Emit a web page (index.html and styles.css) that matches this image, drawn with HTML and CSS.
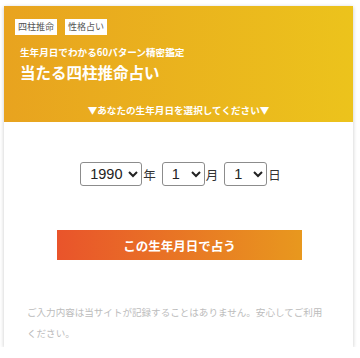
FILE: index.html
```html
<!DOCTYPE html>
<html lang="ja">
<head>
    <meta charset="UTF-8">
    <meta name="viewport" content="width=device-width, initial-scale=1.0">
    <title>当たる四柱推命占い</title>
    <link rel="stylesheet" href="styles.css">
</head>
<body>
    <div class="card">
        <div class="card-head">
            <div class="tags">
                <span class="tag">四柱推命</span>
                <span class="tag">性格占い</span>
            </div>
            <p class="sub">生年月日でわかる60パターン精密鑑定</p>
            <h1 class="title">当たる四柱推命占い</h1>
            <p class="lead">▼あなたの生年月日を選択してください▼</p>
        </div>

        <div class="card-body">
            <div class="date-row">
                <select class="sel sel-year" id="year">
                    <option>1990</option>
                </select><span class="unit">年</span>
                <select class="sel sel-small" id="month">
                    <option>1</option>
                </select><span class="unit">月</span>
                <select class="sel sel-small" id="day">
                    <option>1</option>
                </select><span class="unit">日</span>
            </div>

            <button class="btn">この生年月日で占う</button>

            <p class="note">ご入力内容は当サイトが記録することはありません。安心してご利用ください。</p>
        </div>
    </div>

    <script>
        function fill(id, from, to, selected) {
            let sel = document.getElementById(id);
            sel.innerHTML = "";
            for (let i = from; i <= to; i++) {
                let opt = document.createElement("option");
                opt.value = i;
                opt.textContent = i;
                if (i === selected) opt.selected = true;
                sel.appendChild(opt);
            }
        }

        fill("year", 1920, 2024, 1990);
        fill("month", 1, 12, 1);
        fill("day", 1, 31, 1);
    </script>
</body>
</html>
```

FILE: styles.css
```css
body {
    margin: 0;
    font-family: "Noto Sans CJK JP", "Noto Sans", sans-serif;
    background: #fff;
}
.card {
    width: 349px;
    margin: 6px 0 0 4px;
    background: #fff;
    box-shadow: 0 1px 4px rgba(0, 0, 0, 0.22);
}
.card-head {
    height: 116px;
    box-sizing: border-box;
    padding: 13px 0 0 11px;
    background: linear-gradient(90deg, #e8a31f, #ecc31c);
    color: #fff;
}
.tags {
    display: flex;
    gap: 8px;
}
.tag {
    background: #fff;
    color: #555;
    font-size: 9px;
    line-height: 16px;
    height: 16px;
    padding: 0 3px;
    white-space: nowrap;
}
.sub {
    margin: 10px 0 0 5px;
    font-size: 9.6px;
    line-height: 14px;
    font-weight: bold;
}
.title {
    margin: 3px 0 0 5px;
    font-size: 15.5px;
    line-height: 20px;
    font-weight: bold;
}
.lead {
    margin: 21px 11px 0 0;
    font-size: 9.6px;
    line-height: 14px;
    font-weight: bold;
    text-align: center;
}
.card-body {
    padding: 40px 0 3px;
}
.date-row {
    display: flex;
    align-items: center;
    justify-content: center;
    padding-left: 4px;
}
.sel {
    height: 24px;
    font-family: "Liberation Sans", sans-serif;
    font-size: 14.5px;
    color: #222;
    background: #fff;
    border: 1px solid #8c8c8c;
    border-radius: 3px;
    padding: 0 0 0 5px;
}
.sel-year {
    width: 62px;
}
.sel-small {
    width: 43px;
}
.unit {
    font-size: 12.5px;
    color: #333;
    margin: 0 6px 0 1px;
}
.unit:last-child {
    margin-right: 0;
}
.btn {
    display: block;
    width: 245px;
    height: 30px;
    margin: 44px auto 0;
    position: relative;
    left: 1px;
    border: none;
    background: linear-gradient(90deg, #e9542b, #e8981e);
    color: #fff;
    font-family: inherit;
    font-size: 12.5px;
    font-weight: bold;
    cursor: pointer;
}
.note {
    margin: 42px 0 0;
    padding: 0 22px 0 23px;
    font-size: 9.55px;
    line-height: 21px;
    color: #bcbcbc;
}
```
